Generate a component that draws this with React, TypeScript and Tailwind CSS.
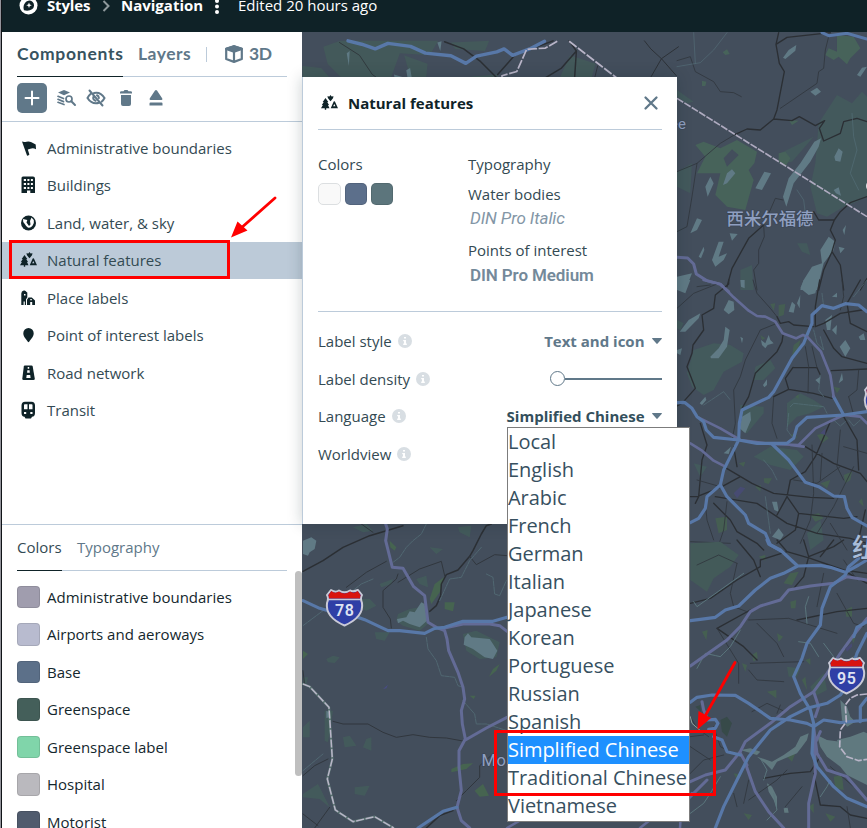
import React from "react";

const FONT = "font-['Open_Sans','Noto_Sans_CJK_SC',sans-serif]";

/* ---------- map ---------- */

function Shield({ x, y, n }: { x: number; y: number; n: string }) {
  return (
    <g transform={`translate(${x} ${y})`}>
      <path d="M5 1 C8 3 11 3 13 1.5 Q18.500 5 24 1.500 Q27 3 32 1 L36 6 Q34 9 36 14 Q38 28 18.500 36.500 Q-1 28 1 14 Q3 9 1 6Z" fill="#2f3fa6" stroke="#c9c9d6" strokeWidth="2" strokeLinejoin="round" />
      <path d="M5.300 2 Q9 5 13 2.500 Q18.500 6.500 24 2.500 Q28 5 31.700 2 L34.500 6 L34 9.500 H3 L2.500 6Z" fill="#d8140f" />
      <path d="M2.200 10.500 H34.800" stroke="#c9c9d6" strokeWidth="1.300" />
      <text x="18.800" y="26.500" textAnchor="middle" fontFamily="Roboto, sans-serif" fontWeight="600" fontSize="16" letterSpacing=".6" fill="#dfe3f3">{n}</text>
    </g>
  );
}

function MapCanvas() {
  const blue = "#5878a8";
  const purple = "#636b96";
  const dark = "#2b2f34";
  return (
    <svg className="block h-full w-full" viewBox="302 32 565 796" fill="none" strokeLinejoin="round" strokeLinecap="round">
      <rect x="302" y="32" width="565" height="796" fill="#434e5c" />

      {/* northern strip */}
      <g transform="translate(200 0) scale(.4253)">
        <g fill="#43595a">
          <path d="M330 96 L560 96 L540 130 L470 125 L450 180 L410 240 L350 240 L340 190 L300 150 L290 110Z" />
          <path d="M241 155 L285 160 L320 200 L300 240 L241 240Z M590 100 L680 96 L670 120 L600 115Z M480 130 L535 150 L530 200 L500 200Z M640 180 L700 175 L690 235 L610 240Z M870 130 L930 150 L905 240 L820 240Z" />
        </g>
        <g fill="#5f7a84">
          <path d="M456 175 L480 182 L470 192 L486 205 L458 185Z M485 165 L494 160 L500 195 L522 205 L505 208 L490 195Z M266 210 L275 205 L275 232 L266 230Z M750 222 L770 198 L774 210 L760 225Z M558 100 L568 97 L565 120Z M345 125 L352 120 L350 155Z" />
        </g>
        <g stroke={dark} strokeWidth="3.500">
          <path d="M575 98 L620 115 L660 145 L700 185 L710 210 L665 240 M700 175 L740 130 L830 96 M868 96 L885 120 L850 160 L800 190 L755 200 L720 232 M885 120 L880 195 L900 235" />
        </g>
        <path d="M328 100 L375 130 L405 175 L440 200 L455 230 M935 155 L915 235" stroke={dark} strokeWidth="1.800" />
        <path d="M1045 96 L1060 115 L1085 138 L1120 178 M1125 110 L1085 138 L1058 185 L1062 240" stroke={dark} strokeWidth="2.200" />
        <path d="M348 96 L380 104 L412 115 L442 102 L495 109 L530 125 L590 131 L625 149 L650 132 L698 122 L715 115 L735 130 L775 115 L810 97" stroke={blue} strokeWidth="8" />
        <path d="M840 97 L812 113 L768 116 L745 168 L710 178 L712 206 L688 233 M868 97 L1122 293" stroke="#b9b5c8" strokeWidth="4" strokeLinecap="butt" strokeDasharray="22 4" />
      </g>

      {/* north east */}
      <g transform="translate(677 30) scale(.33333)">
        <g fill="#43595c">
          <path d="M425 280 L480 195 L525 220 L555 185 L570 200 V500 L540 515 L500 530 L450 560 L420 550 L400 470 L415 400Z" />
          <path d="M0 425 L45 400 L40 490 L0 470Z M0 180 L50 215 L30 220 L0 200Z M310 370 L410 320 L345 395 L310 400Z M360 640 L390 640 L400 675 L375 665Z M190 720 L225 705 L230 780 L190 780Z" />
        </g>
        <g fill="#47635a">
          <path d="M480 15 L530 20 L550 55 L520 85 L510 103 L485 80 L470 90 L445 75 L455 55 L480 65Z M55 345 L80 335 L130 355 L180 330 L240 365 L232 400 L215 420 L230 450 L205 540 L150 530 L115 495 L130 430 L60 430 L85 380Z" />
          <path d="M137 67 L150 58 L158 72 L145 75Z M75 152 L88 155 L85 168 L75 168Z M305 370 L325 365 L340 385 L325 410 L305 395Z M335 270 L365 272 L345 285Z" />
        </g>
        <path d="M140 385 L165 358 L185 375 L150 410Z" fill="#434e5c" />
        <g fill="#607a85">
          <path d="M318 83 L335 60 L358 45 L355 62 L325 87Z M400 185 L420 173 L432 185 L415 197Z M540 135 L555 113 L570 110 L550 140Z M412 335 L432 325 L425 350 L400 395 L350 460 L328 530 L318 500 L335 445 L370 400Z" />
          <path d="M85 470 L100 440 L110 460 L92 500Z M138 465 L150 430 L165 418 L175 430 L150 460Z M235 475 L262 425 L282 430 L255 480Z M472 380 L485 355 L497 365 L490 395 L475 392Z M40 610 L60 565 L75 570 L60 600Z M158 610 L182 612 L165 632Z M105 690 L125 635 L140 635 L125 680 L150 670 L140 690 L115 710Z M430 660 L455 620 L475 635 L470 660 L440 700 L420 780 L370 780 L380 750 L405 710 L435 700Z M0 740 L45 730 L25 780 H0Z M65 680 L80 650 L82 660 L72 685Z M470 480 L485 472 L492 497 L477 490Z M485 650 L503 655 L490 670Z M497 600 L507 585 L502 615Z" />
        </g>
        <g stroke={dark} strokeWidth="4">
          <path d="M305 8 L297 43 L307 100 L322 125 L300 240 L290 267 L345 272 L367 260 L415 287 L443 272 L427 295 L440 333 L490 310 L500 275 L540 265 L570 275 M297 43 L330 22 L460 8 M290 267 L250 300 L210 297 L175 313 M410 545 L425 570 L472 570 L460 600 L475 630 L465 665 L440 720 L425 780 M472 570 L490 545 L520 518 L570 500 M465 665 L490 705 L500 780 M260 585 L215 625 L165 715 L150 770 M570 745 L550 780" />
        </g>
        <g stroke="#30363d" strokeWidth="2.500">
          <path d="M0 92 L40 80 L55 125 L110 155 L130 185 L170 188 L193 200 M455 20 L445 60 L440 115 L425 125 L420 160 L310 235 M175 313 L130 340 L60 400 L0 425 M60 400 L45 500 L30 590 L0 605 M318 510 L295 505 L260 585 L262 620 L245 660 L245 700 L230 720 L240 780 M60 770 L100 765" />
        </g>
        <path d="M150 8 L110 60 L70 98 L0 110 M50 8 L55 100 M360 480 L380 510 L385 550 M525 250 L530 320 L540 360 L520 430 L545 480" stroke="#56717a" strokeWidth="1.800" />
        <path d="M435 8 L455 17 L510 10 L570 27" stroke={blue} strokeWidth="9" />
        <path d="M0 682 L32 684 L50 702 L58 732 L90 752 L130 763 L155 785" stroke={purple} strokeWidth="9" />
        <path d="M0 205 L570 560" stroke="#aeaabf" strokeWidth="5" strokeLinecap="butt" strokeDasharray="22 4" />
      </g>

      {/* east */}
      <g transform="translate(677 280) scale(.33333)">
        <g fill="#435a5c">
          <path d="M50 210 L110 190 L160 195 L200 220 L195 245 L140 275 L110 330 L80 345 L45 320 L30 280Z M235 260 L280 240 L295 265 L260 300 L230 300Z M330 370 L370 340 L410 360 L440 380 L400 400 L360 410 L330 440Z M230 530 L280 500 L360 510 L380 530 L340 570 L280 555Z M0 120 L20 130 L10 150 L0 145Z M190 375 L260 380 L260 400 L210 460 L190 450Z M50 550 L90 560 L70 590Z M390 760 L430 720 L440 780 L400 810Z" />
        </g>
        <g fill="#46644f" opacity=".75">
          <path d="M305 75 L325 72 L320 105 L305 110Z M280 72 L295 70 L290 92Z M350 195 L370 180 L365 205 L345 230Z M420 465 L440 460 L455 475 L435 490Z M260 595 L285 595 L275 612 L262 608Z M115 715 L150 710 L150 750 L125 760Z M500 585 L525 575 L520 600 L505 610Z M430 610 L460 600 L450 625Z M545 665 L555 655 L560 680Z M250 165 L265 175 L255 180Z M355 350 L365 343 L365 357Z M185 550 L205 545 L200 560Z M235 620 L252 615 L250 635Z M400 705 L425 700 L440 715 L415 725Z M470 320 L490 325 L480 340Z M340 465 L355 460 L360 475Z" />
        </g>
        <g fill="#607a85">
          <path d="M8 155 L35 120 L70 100 L65 115 L25 155Z M140 90 L155 60 L170 65 L172 90 L155 103Z M100 230 L125 205 L140 180 L145 140 L158 150 L150 200 L125 235 L102 235Z M252 180 L265 190 L275 165 L280 180 L290 190 L272 195 L265 205 L255 195Z M370 25 L380 0 H425 L415 40 L395 45Z M335 95 L345 65 L355 75 L350 98Z M360 70 L370 45 L368 85Z M445 120 L465 105 L460 150 L450 150Z M488 200 L505 180 L520 205 L505 230Z M545 170 L560 160 L565 180 L550 180Z M415 300 L430 290 L428 312Z M485 310 L495 278 L498 300Z M188 445 L195 410 L220 395 L222 420 L205 460Z M68 370 L85 350 L88 360 L75 375Z M140 520 L162 500 L155 522Z M285 665 L300 665 L305 695 L292 690Z M285 770 L305 745 L320 765 L310 780Z M258 315 L270 298 L270 315 L262 322Z M465 50 L480 38 L480 52Z M190 0 L203 0 L203 25 L192 20Z M190 170 L198 175 L195 190Z M0 210 L15 205 L10 225 L0 220Z M0 30 L20 0 L40 0 L25 40Z M465 150 L480 135 L478 165Z" />
        </g>
        <g stroke={dark} strokeWidth="4">
          <path d="M155 0 L155 12 L115 45 L110 85 L75 105 L80 150 L48 195 L45 220 L30 260 L55 325 L15 370 L0 378 M318 165 L315 185 L300 215 L235 280 L215 350 L195 385 M428 0 L415 80 L415 140 L440 130 L490 100 L555 90 M440 150 L470 205 L495 230 L570 250 M300 110 L310 130 L335 125 L350 135 L410 140 M550 0 L510 70 L520 130 L570 155 M348 262 L325 295 L335 328 L410 340 L465 355 M335 328 L290 350 M348 262 L420 263 L430 285 M463 272 L570 267 M385 500 L470 550 L550 580 L570 605 M460 425 L415 530 L385 575 L340 600 L330 650 L300 705 M140 560 L225 610 L290 640 L400 652 L470 655 M70 430 L90 495 L75 540 L65 650 L55 670 M115 650 L240 670 L330 730 L420 760 L520 775 L570 790 M170 500 L180 560 M330 650 L365 700 L500 715 L540 710 M365 700 L355 750 L300 790 M110 670 L160 720 L180 755 L240 790 L260 810 M500 410 L540 480 L545 570 M565 690 L540 800 M190 590 L135 620 L60 650 L40 650" />
        </g>
        <g stroke="#30363d" strokeWidth="2.500">
          <path d="M228 0 L240 40 L280 85 L300 110 M0 85 L50 40 L120 12 M300 130 L250 150 L205 240 L190 290 L170 330 L175 430 L165 480 M385 200 L395 260 L393 340 M405 200 L420 263 M495 0 L500 50 L490 90 M515 350 L530 405 M545 270 L540 330 L515 350 M290 350 L285 430 L300 475 M405 495 L410 640 L400 720 L370 790 M435 520 L430 600 M490 450 L480 560 L500 600 M530 560 L470 680 L420 760 M500 500 L570 520 M60 600 L130 620 M85 670 L90 720 L110 780 M0 760 L40 785 L160 790 M150 665 L140 750 L120 810 M460 730 L510 810 M350 600 L420 610 L490 560" />
        </g>
        <path d="M340 380 L350 370 L440 380 L450 400 M335 400 L330 450 L345 470 M470 420 L490 438 L505 425 M515 420 L530 438 L550 420 M430 170 L440 210 L420 190 L410 150 M435 40 L440 80 M80 375 L140 335 L160 360 M260 540 L285 570 L300 600 M430 285 L425 330 L440 350 M265 650 L280 760 M570 0 L530 50" stroke="#56717a" strokeWidth="2" strokeDasharray="12 3" />
        <path d="M80 0 L130 12 L170 52 L215 92 L240 108 L265 110 L295 125 L317 160 L357 175 L378 165 L390 170 M65 413 L130 445 L190 480 L280 492 L365 495 L415 445 L500 405 L550 410 L570 430 M40 490 L75 512 L110 542 L145 560 M340 495 L380 500" stroke={purple} strokeWidth="8" />
        <path d="M0 368 L22 367 L45 385 L60 410 L80 425 L88 450 L110 472 L185 480 L240 490 L330 490 L350 475 L360 440 L390 412 L500 405 L570 395 M570 95 L545 75 L505 71 L470 85 L435 77 L405 105 L405 130 L390 165 L380 190 L345 235 L290 335 L275 352 L195 390 L187 430 L185 480 L160 530 L140 570 L130 615 L90 650 L85 685 L65 715 L40 728 M285 492 L335 540 L385 607 L425 620 L470 648 L502 650 L510 685 L525 712 L570 738 M132 618 L150 650 L205 705 L215 730 L265 760 L280 795 L310 812 M470 350 L500 405" stroke={blue} strokeWidth="9.500" />
        <path d="M390 170 L432 215 L460 285 L470 350" stroke={purple} strokeWidth="8" />
        <path d="M170 640 L190 620 L205 625 L180 655Z M430 460 L445 445 L445 465Z" fill="#474b72" />
      </g>

      {/* south east */}
      <g transform="translate(677 540) scale(.33333)">
        <path d="M40 10 L130 5 L185 45 L160 80 L110 115 L90 155 L40 120Z M330 380 L370 385 L360 410 L335 410Z M400 440 L440 400 L450 450 L410 470Z M505 640 L570 580 L570 600 L520 650Z" fill="#435a59" />
        <g fill="#46644f" opacity=".8">
          <path d="M340 100 L365 95 L345 135 L320 130Z M340 185 L358 180 L355 205 L342 205Z M225 345 L240 335 L242 355 L230 365Z M300 280 L318 290 L305 305Z M75 275 L92 270 L88 300Z M385 360 L400 355 L400 375Z M245 50 L265 45 L265 62Z M270 455 L298 450 L298 475Z M505 210 L525 200 L525 230 L508 230Z M470 710 L495 705 L500 750 L475 745Z M330 650 L355 640 L345 665Z M200 820 L225 825 L215 840Z M395 800 L410 790 L410 820Z M170 700 L195 705 L180 720Z M520 290 L540 270 L530 310Z M500 550 L520 545 L515 560Z M375 420 L385 410 L390 450Z M445 820 L475 830 L460 845Z M195 370 L210 375 L205 395Z" />
        </g>
        <path d="M130 540 L150 530 L165 550 L150 590 L135 575Z M55 500 L70 495 L72 515Z" fill="#374a49" />
        <g fill="#60797f">
          <path d="M420 585 L450 600 L490 605 L505 640 L530 655 L570 665 V735 L540 720 L510 705 L490 680 L450 650 L430 620Z M355 620 L370 590 L395 580 L390 600 L375 620 L360 640 L300 665 L285 690 L265 670 L240 650 L285 665 L320 645Z M490 480 L510 500 L520 530 L535 545 L510 560 L495 540Z M320 805 L332 803 L335 818 L322 818Z M270 730 L285 740 L300 770 L300 810 L290 780 L275 755Z M480 600 L520 590 L560 575 L570 580 V670 L530 660 L500 640Z M190 630 L220 625 L250 635 L240 645Z" />
        </g>
        <g stroke={dark} strokeWidth="4">
          <path d="M40 190 L100 175 L180 120 L250 80 L250 60 L330 35 L400 55 L500 90 L570 100 M380 0 L395 50 L380 110 L350 145 M360 240 L480 215 L570 205 M220 210 L120 265 L200 320 L240 360 M395 50 L470 20 L500 0 M515 100 L570 130 M180 0 L230 60 L250 110 M260 715 L340 700 L400 695 L430 650 M410 700 L430 795 L490 800 L520 825 L570 835 M470 0 L430 50 M330 35 L300 0" />
        </g>
        <g stroke="#30363d" strokeWidth="2.500">
          <path d="M60 75 L125 45 L180 70 M180 70 L160 160 L170 200 L210 215 M215 240 L335 235 L480 280 M120 265 L185 370 L185 430 M240 250 L300 310 L320 350 M215 390 L240 420 L320 425 M220 370 L380 365 M225 515 L270 490 L325 515 M300 520 L310 495 M170 760 L180 800 M325 800 L375 740 M330 690 L300 720 L215 780 M480 160 L530 250 L560 260 M440 100 L420 200 M540 120 L500 60 M40 700 L80 660 L140 645 M40 620 L100 660 M110 560 L130 620 L170 640 M510 800 L520 864 M215 720 L200 790 M40 530 L60 565 L95 590 M40 590 L80 585 M460 680 L530 740" />
        </g>
        <path d="M50 185 L60 200 L130 150 L200 100 M60 385 L85 340 L130 350 L160 320 L190 270 M365 305 L400 310 L425 350 M40 820 L80 790 L100 760 L130 710 M270 840 L300 810 L290 760 M430 770 L450 740 L460 720 L470 740 M500 390 L530 350 M395 170 L385 200 L390 250 M250 655 L270 690 L260 720 M440 310 L470 350" stroke="#5a757c" strokeWidth="3" strokeDasharray="12 2" />
        <path d="M40 378 L100 335 L150 300 L190 260 L220 215 L250 198 L310 180 L335 150 L400 138 L470 130 L510 110 L570 120 M570 235 L530 285 L490 340 L450 400 L410 455 L340 500 L280 550 L205 605 L190 635 L145 690 L85 705 L40 725 M205 670 L235 755 L275 815 L320 864 M190 640 L210 675 M410 560 L420 640 L450 690 L510 710 L570 780 M430 575 L412 615 L415 700 L395 790 L395 864 M75 485 L80 510 L90 535 M410 455 L425 500 L415 530 M45 760 L20 800 M40 770 L90 720" stroke={purple} strokeWidth="9" />
        <path d="M270 0 L275 12 L310 30 L362 78 L430 76 L460 82 L505 97 L545 75 L570 60 M362 78 L320 100 L280 115 L235 150 L185 198 L145 210 L115 232 L70 238 L40 242 M545 55 L515 80 L505 105 L460 140 L435 205 L430 255 L390 310 L375 355 L350 410 L370 460 L400 510 L410 550 L405 640 L420 680 L470 740 L510 775 L570 800 M40 487 L60 472 L105 465 L175 466 L215 490 L280 535 L340 540 L390 550 L410 560 L440 540 L490 548 L570 540 M530 410 L490 465 L450 490 L390 505 L340 530 L280 570 L215 650 L180 720 L140 800 L115 864 M110 590 L135 600 L150 635 L190 645 M90 540 L115 538 L123 550 L115 565 L95 568 M570 280 L540 340 L520 400 M550 545 L550 500 L570 475 M570 245 L540 262 L530 290" stroke={blue} strokeWidth="9.500" />
        <path d="M570 462 L540 465 L520 475 L505 495 L508 545 L490 570 L488 620 L510 650 L545 662 L570 658" stroke="#b9b5c8" strokeWidth="5" strokeLinecap="butt" strokeDasharray="22 5" />
        <path d="M40 530 L45 550 L70 572" stroke="#90a29e" strokeWidth="3" />
        <path d="M505 325 L525 310 L525 320 L510 335Z" fill="#474b72" />
      </g>

      {/* south west */}
      <g transform="translate(303 524) scale(.33333)">
        <g fill="#445e5b" opacity=".8">
          <path d="M285 270 L320 255 L350 250 L375 300 L350 320 L300 305 L280 290Z M480 330 L520 320 L590 355 L580 400 L530 405 L490 380Z M465 10 L505 5 L500 40 L470 25Z M150 10 L190 0 L210 20 L180 25Z M160 225 L200 225 L220 245 L190 260 L165 250Z M340 165 L370 155 L375 190 L350 180Z M215 325 L260 325 L245 350 L220 345Z M380 70 L420 75 L400 90Z M0 610 L20 590 L20 640 L0 640Z M155 790 L200 785 L185 815 L155 810Z M0 810 L45 780 L80 850 L50 825 L0 820Z M65 560 L90 560 L75 655 L65 650Z M190 645 L205 640 L205 680 L180 670Z M70 405 L90 395 L110 400 L95 417 L75 415Z M230 180 L270 165 L265 180 L235 190Z M120 640 L140 635 L160 665 L125 670Z M0 460 L15 460 L10 480 L0 475Z" />
        </g>
        <g fill="#466450">
          <path d="M380 225 L395 180 L425 158 L410 205 L385 240Z M425 235 L455 235 L450 262 L425 255Z M515 800 L540 780 L558 815 L530 818Z M445 735 L480 720 L510 718 L490 735 L445 745Z M558 458 L570 435 L590 420 L580 440Z M260 50 L280 70 L275 80 L262 70Z M500 515 L518 515 L512 525Z M0 380 L15 390 L0 405Z" />
        </g>
        <g fill="#607a85">
          <path d="M0 50 L25 40 L40 50 L35 75 L20 85 L15 95 L0 90Z M282 285 L310 280 L320 262 L335 265 L355 235 L365 240 L372 290 L350 310 L320 300 L300 290 L285 298Z M485 340 L495 328 L505 340 L560 345 L570 360 L583 380 L570 405 L545 400 L510 375 L482 362Z M70 560 L80 565 L80 580 L70 582Z" />
        </g>
        <g stroke={dark} strokeWidth="4.500">
          <path d="M0 142 L60 110 L120 70 L200 35 L300 5 M565 0 L550 5 L535 30 L510 80 L500 97 L465 138 L430 152 L415 180 L413 215 L400 245 L380 262 M370 912 L410 875 L450 860" />
        </g>
        <g stroke="#2f353b" strokeWidth="2.800">
          <path d="M175 0 L210 25 M130 190 L190 145 L250 112 M265 312 L262 285 L240 250 L240 200 L280 165 L285 150 M285 175 L350 135 L415 112 L425 155 M500 97 L520 122 L575 92 L612 95 M0 440 L5 485 M90 592 L120 600 L195 600 L240 625 L280 640 L330 632 L380 640 L430 642 L485 652 M0 755 L35 725 L75 705 M35 912 L80 850 M0 870 L45 905 M460 830 L490 800 L530 760 L530 725 L570 690" />
        </g>
        <path d="M370 0 L355 30 L330 50 L310 70 L290 100 L270 115 M210 165 L175 180 L130 215 L60 260 L0 305 M370 340 L375 375 L400 410 L415 455 L455 460 L465 485 L480 490 M480 530 L515 570 L520 600 L550 600 L612 620 M550 150 L570 160 L575 210 L590 215 L610 170 M0 740 L30 715 L60 690 M535 70 L500 110 L475 160 L440 165 L410 230" stroke="#536c76" strokeWidth="2.500" strokeDasharray="14 3" />
        <path d="M248 0 L253 15 L248 50 L268 130 L300 133 L332 188 L365 215 L375 295 L400 310 L425 320 L432 345 L437 380 L465 445 L480 490 L485 525 L475 560 L478 600 L487 645 L468 680 L468 730 L475 800 L462 850 L475 890 L500 912 M487 648 L550 612 L612 580 M425 312 L480 300 L560 300 L590 305 L612 322" stroke={purple} strokeWidth="9" />
        <path d="M0 230 L50 253 L80 262 M160 278 L185 287 L255 320 L290 320 L365 328 L395 313 L425 310 L480 292 L570 292 L612 280 M345 912 L420 862 L462 850" stroke={blue} strokeWidth="9.500" />
        <path d="M0 480 L20 488 L78 550 L88 705 L73 765 L97 858 L150 893 L215 878 L272 912" stroke="#6b9284" strokeWidth="7" opacity=".55" />
        <path d="M0 480 L20 488 L78 550 L88 705 L73 765 L97 858 L150 893 L215 878 L272 912" stroke="#b9b5c8" strokeWidth="4.500" strokeLinecap="butt" strokeDasharray="24 5" />
        <path d="M240 495 L255 482 L250 493Z" fill="#494d86" />
      </g>

      <path d="M507 828 L545 806 M680 828 L681 812 M640 828 L660 812" stroke={purple} strokeWidth="2.500" />

      <g fontFamily="'Noto Sans CJK SC', sans-serif" fill="#8f9fc0" stroke="#3b4656" strokeWidth="1.500" paintOrder="stroke">
        <text x="726.500" y="224.500" fontSize="17.400" fontWeight="500">西米尔福德</text>
        <text x="852" y="557" fontSize="26" fontWeight="500" fill="#a9bcd8">纽</text>
        <text x="678" y="129" fontSize="15" fontFamily="Roboto, sans-serif">e</text>
        <text x="481.500" y="766" fontSize="16.500" letterSpacing=".5" fontFamily="Roboto, sans-serif">Mor</text>
      </g>
      <Shield x={326} y={589} n="78" />
      <Shield x={828} y={657} n="95" />
      <Shield x={864} y={384} n="" />
      <circle cx="872" cy="186" r="6" fill="#dfe0e4" />
    </svg>
  );
}

/* ---------- icons ---------- */

const FlagIcon = () => (
  <svg className="h-[18px] w-[18px]" viewBox="0 0 18 18" fill="#0f2328">
    <path d="M3 2.600 Q5 3.400 7.500 2.700 Q10 1.900 12.500 3.300 L16.700 5.600 L17 10.200 Q14 8.600 11.300 9.800 Q9.500 10.500 8.800 10.500 L10.400 15.600 Q9.500 17 8 16.600 L5.500 9.500Z" />
  </svg>
);
const BuildingIcon = () => (
  <svg className="h-[18px] w-[18px]" viewBox="0 0 18 18">
    <path d="M4 .5 H14 Q16 .5 16 2.500 V17 H11.300 V14.500 H8 V17 H2.500 V2 Q2.500 .5 4 .5Z" fill="#0f2328" />
    <path d="M4.800 2.900h2.200v2.200H4.800zM8.400 2.900h2v2.200H8.400zM11.900 2.900h2v2.200h-2zM4.800 6.900h2.200v2.200H4.800zM8.400 6.900h2v2.200H8.400zM11.900 6.900h2v2.200h-2zM4.800 10.900h2.200v2.200H4.800zM8.400 10.900h2v2.200H8.400zM11.900 10.900h2v2.200h-2z" fill="#fff" />
  </svg>
);
const GlobeIcon = () => (
  <svg className="h-[18px] w-[18px]" viewBox="0 0 18 18">
    <circle cx="9.500" cy="9" r="7.500" fill="#0f2328" />
    <path d="M4 5 L8.300 6 L7.500 8.500 L10 12 L11.500 10.500 L11 7 L12.500 3.500 L14.800 6 Q15.500 9 13.500 11.800 Q11.500 14.300 8.800 13.500 Q7 12 5.800 10 Q3.600 8.500 4 5Z" fill="#fff" />
  </svg>
);
const NatureIcon = () => (
  <svg className="h-[18px] w-[18px]" viewBox="0 0 18 18" fill="#0f2328">
    <path d="M5.500 4 L8.300 7.900 H7.300 L9 10.900 H8 L9.500 14.300 H6.200 V15.800 H4.800 V14.300 H1 L2.900 10.900 H1.900 L3.700 7.900 H2.700Z" />
    <path d="M10.500 1 L11.600 2.400 L13.500 2.200 L13 4.300 L11.200 6.500 L10.500 7.300 L9.800 6.500 L8 4.300 L7.400 2.200 L9.400 2.400Z" />
    <path fillRule="evenodd" d="M13.700 7.500 Q14.300 7 14.900 7.500 L18 14.300 H10.700Z M14.300 9.900 L13.200 12.300 H15.400Z" />
  </svg>
);
const PlaceIcon = () => (
  <svg className="h-[18px] w-[18px]" viewBox="0 0 18 18">
    <path d="M2.300 16 V4.500 Q2.300 1.800 4.800 1.500 Q6.500 1 7.500 3 L8.300 3.500 V8.500 L7 10.300 V16 H5.800 V12.500 H4.600 V16Z M8 16 V10.800 L9.500 8.500 H12.800 L16 11.500 V16 H13.200 V13 H11.200 V16Z" fill="#0f2328" />
    <path d="M5 5h1.500v1.500H5zM11.300 10h1.500v1.200h-1.500z" fill="#fff" />
  </svg>
);
const PinIcon = () => (
  <svg className="h-[18px] w-[18px]" viewBox="0 0 18 18" fill="#0f2328">
    <path d="M9.500 2 A5.200 5.200 0 0 1 14.700 7.200 C14.700 11 11 14 10.200 15.800 Q9.500 16.600 8.800 15.800 C8 14 4.300 11 4.300 7.200 A5.200 5.200 0 0 1 9.500 2Z" />
  </svg>
);
const RoadIcon = () => (
  <svg className="h-[18px] w-[18px]" viewBox="0 0 18 18">
    <path d="M5.800 1.500 H12.500 Q13.500 1.500 13.700 2.500 L15.800 14.800 Q15.800 16 14.500 16 H4.500 Q3.200 16 3.300 14.800 L4.800 2.500 Q5 1.500 5.800 1.500Z" fill="#0f2328" />
    <path d="M8.700 3h1.500v1.800H8.700zM8.300 6.200h2.300l.2 2.600H8.100zM7.700 11h3.500l.4 3H7.300z" fill="#fff" />
  </svg>
);
const TransitIcon = () => (
  <svg className="h-[18px] w-[18px]" viewBox="0 0 18 18">
    <path d="M6 .8 H12.500 Q16 1 16 4.500 V12 Q16 15.500 13 15.800 L12 17.500 H6.500 L5.500 15.800 Q2.500 15.500 2.500 12 V4.500 Q2.500 1 6 .8Z" fill="#0f2328" />
    <path d="M5 4 Q5 3.200 5.800 3.200 H8.500 V8.300 H5Z M10 3.200 H12.700 Q13.500 3.200 13.500 4 V8.300 H10Z M5 11h2.200v2H5zM11.300 11H13.500v2h-2.200z" fill="#fff" />
  </svg>
);
const InfoIcon = () => (
  <svg className="ml-[6px] h-[14px] w-[14px]" viewBox="0 0 14 14">
    <circle cx="7" cy="7" r="7" fill="#d8dee3" />
    <path d="M6 3h2v1.600H6zM5.200 6H8v3.600h.8V11H5.200V9.600H6V7.300h-.8z" fill="#fff" />
  </svg>
);
const Caret = () => (
  <svg className="ml-[7.500px] h-[6px] w-[10px]" viewBox="0 0 10 6" fill="#607889"><path d="M.5 0 H9.500 Q10.300 .3 9.600 1 L5.600 5.600 Q5 6.200 4.400 5.600 L.4 1 Q-.3 .3 .5 0Z" /></svg>
);

/* ---------- data ---------- */

const components = [
  { label: "Administrative boundaries", Icon: FlagIcon },
  { label: "Buildings", Icon: BuildingIcon },
  { label: "Land, water, & sky", Icon: GlobeIcon },
  { label: "Natural features", Icon: NatureIcon, active: true },
  { label: "Place labels", Icon: PlaceIcon },
  { label: "Point of interest labels", Icon: PinIcon },
  { label: "Road network", Icon: RoadIcon },
  { label: "Transit", Icon: TransitIcon },
];

const swatches = [
  ["Administrative boundaries", "bg-[#a09dae]"],
  ["Airports and aeroways", "bg-[#b8bbcf]"],
  ["Base", "bg-[#5c7089]"],
  ["Greenspace", "bg-[#445f5a]"],
  ["Greenspace label", "bg-[#80d5aa]"],
  ["Hospital", "bg-[#bab9be]"],
  ["Motorist", "bg-[#505b6d]"],
];

const languages = ["Local", "English", "Arabic", "French", "German", "Italian", "Japanese", "Korean", "Portuguese", "Russian", "Spanish", "Simplified Chinese", "Traditional Chinese", "Vietnamese"];

/* ---------- sections ---------- */

function Header() {
  return (
    <header className="h-8 overflow-hidden bg-[#0f2227] text-[15px] text-white">
      <div className="flex h-[11px] items-center whitespace-nowrap pl-[17px] font-bold">
        <svg className="h-[19px] w-[19px] shrink-0" viewBox="0 0 19 19">
          <circle cx="9.500" cy="9.500" r="9" fill="#fff" />
          <path d="M5 14.300 Q3.600 9.800 6 7.100 A4.800 4.800 0 1 1 13 13.300 Q10 15.300 5 14.300Z" fill="#0f2227" />
          <path d="M10 6.500 L10.800 8.500 L12.800 9.300 L10.800 10.100 L10 12.100 L9.200 10.100 L7.200 9.300 L9.200 8.500Z" fill="#fff" />
        </svg>
        <span className="ml-[9px] w-[45px] tracking-[-.15px]">Styles</span>
        <svg className="ml-[10px] h-[12px] w-[9px]" viewBox="0 0 9 12" fill="none" stroke="#8f999c" strokeWidth="2"><path d="M1.500 1 L6.500 6 L1.500 11" /></svg>
        <span className="ml-[10px] w-[82px]">Navigation</span>
        <svg className="ml-[11px] h-[18px] w-[6px]" viewBox="0 0 6 18" fill="#fff"><circle cx="3" cy="4" r="2" /><circle cx="3" cy="9.500" r="2" /><circle cx="3" cy="15" r="2" /></svg>
        <span className="ml-[18px] font-normal">Edited 20 hours ago</span>
      </div>
    </header>
  );
}

function Toolbar() {
  return (
    <div className="flex h-[45px] shrink-0 items-center border-b border-[#bccbda] pb-[2px] pl-[15px]">
      <button className="flex h-[30px] w-[30px] items-center justify-center rounded-[5px] bg-[#607889]">
        <svg className="h-4 w-4" viewBox="0 0 16 16" stroke="#fff" strokeWidth="2" strokeLinecap="round"><path d="M8 1.500V14.500M1.500 8H14.500" /></svg>
      </button>
      <svg className="ml-[9px] h-[20px] w-[21px]" viewBox="0 0 21 20" fill="none" stroke="#607889" strokeWidth="1.700" strokeLinecap="round">
        <path d="M8 2 L14 4.600 L8 7.300 L2 4.600Z" fill="#607889" stroke="none" />
        <path d="M2 8.300 L7.500 10.500 M2 11.300 L7.500 13.600 M2 14.300 L8 16.500" />
        <circle cx="13" cy="11" r="3" /><path d="M15.300 13.300 L19 17" strokeWidth="2" />
      </svg>
      <svg className="ml-[9px] h-[20px] w-[20px]" viewBox="0 0 20 20" fill="none" stroke="#607889" strokeWidth="2" strokeLinecap="round">
        <path d="M4.800 5.800 Q2.800 7.500 1.500 10 Q4.800 15.300 10 15.300 Q11.500 15.300 12.800 14.800 M8 5 Q14.500 3.500 18.500 10 Q17.500 12 15.800 13.500 M3.500 2.500 L16.500 17.500 M7.300 9 Q6.800 11.800 9.500 12.800 M11 7.300 Q12.800 8 12.900 10" />
      </svg>
      <svg className="ml-[14px] h-[18px] w-[12px]" viewBox="0 0 12 18" fill="#607889">
        <path d="M0 3.500 Q0 2.300 1.300 2.300 H3.500 L4.500 1 H7.500 L8.500 2.300 H10.700 Q12 2.300 12 3.500 V4.500 H0Z M1 6 H11 V15 Q11 17 9 17 H3 Q1 17 1 15Z" />
      </svg>
      <svg className="ml-[17px] h-[18px] w-[14px]" viewBox="0 0 14 18" fill="#607889">
        <path d="M6 1.600 Q7 .5 8 1.600 L13.300 9.500 Q13.800 11 12.300 11 H1.700 Q.2 11 .7 9.500Z M1.500 13.500 H12.500 Q13.500 13.500 13.500 14.500 V16.500 H.5 V14.500 Q.5 13.500 1.500 13.500Z" />
      </svg>
    </div>
  );
}

function Sidebar() {
  return (
    <aside className="flex w-[300px] shrink-0 flex-col bg-white">
      <div className="mx-[15px] flex h-[45px] shrink-0 items-center border-b border-[#bccbda] font-['Lato',sans-serif] text-[17.500px] font-bold text-[#607889]">
        <span className="flex h-[45px] w-[106px] shrink-0 items-center border-b border-[#0f2328] pt-px tracking-[.75px] text-[#37535f]">Components</span>
        <span className="ml-[15px] w-[53px] tracking-[.5px]">Layers</span>
        <span className="ml-[15px] h-[15px] w-px bg-[#bccbda]" />
        <svg className="ml-[18px] h-[18px] w-[18px]" viewBox="0 0 18 18" fill="none" stroke="#607889" strokeWidth="2.200" strokeLinejoin="round">
          <path d="M9 1.200 L16.800 3.900 V14 L9 16.900 L1.200 14 V3.900Z" /><path d="M9 1.200 L16.800 3.900 L9 6.600 L1.200 3.900Z" fill="#607889" /><path d="M9 6V17" />
        </svg>
        <span className="ml-[6px] tracking-[-.3px]">3D</span>
      </div>
      <Toolbar />
      <ul className="h-[403px] shrink-0 border-b border-[#bccbda] pt-[7.200px] text-[15px] text-[#334a53]">
        {components.map(({ label, Icon, active }) => (
          <li key={label} className={`flex h-[37.500px] items-center pl-[17px] ${active ? "bg-[#bccad8]" : ""}`}>
            <Icon /><span className="ml-[10px] pt-[.5px]">{label}</span>
          </li>
        ))}
      </ul>
      <div className="mx-[15px] flex h-[46px] shrink-0 border-b border-[#bccbda] text-[15px] leading-[22px] text-[#607889]">
        <span className="h-[46px] w-[45px] border-b border-[#0f2328] pt-[11px] text-[#334a53]">Colors</span>
        <span className="ml-[15px] pt-[11px]">Typography</span>
      </div>
      <div className="flex min-h-0 flex-1 overflow-hidden">
        <ul className="flex-1 pt-[7.200px] text-[15px] text-[#14272d]">
          {swatches.map(([label, color]) => (
            <li key={label} className="flex h-[37.500px] items-center pl-[15px]">
              <span className={`h-[22.500px] w-[23px] rounded-[4px] border border-black/10 ${color}`} />
              <span className="ml-[7px] pt-[.5px]">{label}</span>
            </li>
          ))}
        </ul>
        <div className="h-[205px] w-[7px] rounded-full bg-[#bfbfbf]" />
      </div>
    </aside>
  );
}

function Setting({ label, children }: { label: string; children?: React.ReactNode }) {
  return (
    <div className="flex h-[37.500px] items-center">
      <span>{label}</span><InfoIcon />
      <div className="ml-auto flex items-center font-bold">{children}</div>
    </div>
  );
}

function FeaturePanel() {
  return (
    <section className="absolute left-0 top-[45px] h-[447px] w-[375px] border-l border-[#bccbda] bg-white px-[15px] text-[15px] text-[#334a53] shadow-[0_0_14px_rgba(15,35,40,0.22)]">
      <div className="flex h-[53px] items-center border-b border-[#bccbda]">
        <span className="ml-[2px]"><NatureIcon /></span>
        <h2 className="ml-[10px] pt-px font-bold text-[#0f2328]">Natural features</h2>
        <svg className="ml-auto mr-[3px] h-4 w-4" viewBox="0 0 16 16" stroke="#607889" strokeWidth="2.300" strokeLinecap="round"><path d="M2.500 2.500L13.500 13.500M13.500 2.500L2.500 13.500" /></svg>
      </div>
      <div className="flex h-[182px] border-b border-[#bccbda] pt-[24px] leading-[20px]">
        <div className="w-[150px]">
          <p>Colors</p>
          <div className="mt-[9px] flex gap-[4px]">
            <span className="h-[22px] w-[22.500px] rounded-[5px] border border-[#dcdfe1] bg-[#f9f9f9]" />
            <span className="h-[22px] w-[22px] rounded-[5px] border border-black/10 bg-[#5c6f8b]" />
            <span className="h-[22px] w-[22px] rounded-[5px] border border-black/10 bg-[#5c757c]" />
          </div>
        </div>
        <div>
          <p>Typography</p>
          <p className="mt-[10px]">Water bodies</p>
          <p className="ml-[2px] mt-[4px] font-['Roboto',sans-serif] text-[17px] italic tracking-[-.1px] text-[#8396a6]">DIN Pro Italic</p>
          <p className="mt-[12px]">Points of interest</p>
          <p className="ml-[2px] mt-[5px] font-['Roboto',sans-serif] text-[17px] font-semibold tracking-[-.1px] text-[#74899a]">DIN Pro Medium</p>
        </div>
      </div>
      <div className="pt-[10.700px]">
        <Setting label="Label style"><span className="text-[#607889]">Text and icon</span><Caret /></Setting>
        <Setting label="Label density">
          <span className="h-[15px] w-[15px] rounded-full border border-[#607889] bg-white" /><span className="h-[2px] w-[97px] bg-[#607889]" />
        </Setting>
        <Setting label="Language"><span className="text-[#334f5c]">Simplified Chinese</span><Caret /></Setting>
        <Setting label="Worldview" />
      </div>
    </section>
  );
}

function LanguageMenu() {
  return (
    <ul className="absolute left-[205px] top-[395px] h-[395px] w-[183px] whitespace-nowrap border border-[#7c7c7c] bg-white text-[20px] leading-[28px] tracking-[-.04px] text-[#37505f]">
      {languages.map((l) => (
        <li key={l} className={`h-[28px] ${l === "Simplified Chinese" ? "bg-[#1e90ff] text-white" : ""}`}>{l}</li>
      ))}
    </ul>
  );
}

function Annotations() {
  return (
    <svg className="pointer-events-none absolute inset-0 h-full w-full" viewBox="0 0 867 828" fill="none" stroke="#f00" strokeWidth="3">
      <rect x="10.500" y="241.500" width="218" height="36" />
      <rect x="495.500" y="731.500" width="219" height="63" />
      <path d="M275 198 L240 229 M735 662.500 L704 718" strokeWidth="2.800" strokeLinecap="round" />
      <path d="M231 237.500 L237.500 221.500 L247.500 230.500Z M697.500 729.500 L698.500 711 L711 718Z" fill="#f00" stroke="none" />
    </svg>
  );
}

export default function App() {
  return (
    <div className={`relative flex h-[828px] w-[867px] overflow-hidden ${FONT}`}>
      <div className="w-[2px] shrink-0 border-r border-[#101317] bg-[#94949b]" />
      <div className="flex min-w-0 flex-1 flex-col">
        <Header />
        <div className="flex min-h-0 flex-1">
          <Sidebar />
          <main className="relative min-w-0 flex-1">
            <MapCanvas />
            <FeaturePanel />
            <LanguageMenu />
          </main>
        </div>
      </div>
      <Annotations />
    </div>
  );
}
